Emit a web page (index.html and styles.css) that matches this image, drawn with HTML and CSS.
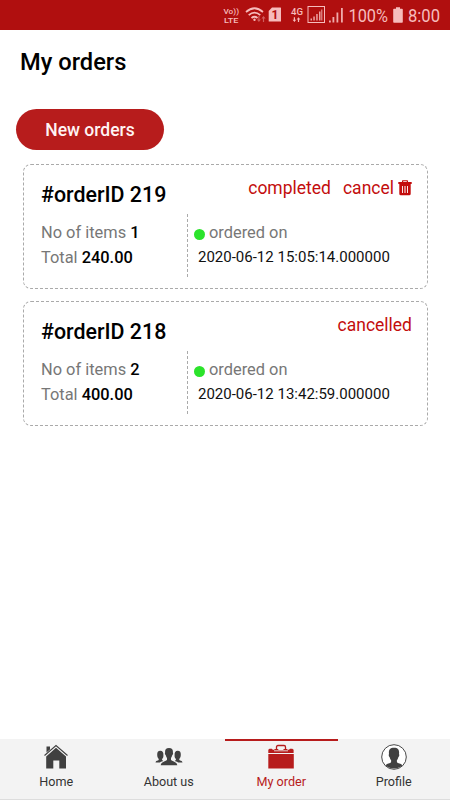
FILE: index.html
```html
<!DOCTYPE html>
<html lang="en">
<head>
  <meta charset="UTF-8" />
  <meta name="viewport" content="width=device-width, initial-scale=1.0" />
  <title>My orders</title>
  <link rel="stylesheet" href="styles.css">
</head>
<body>
  <header class="status-bar">
    <svg width="230" height="30" viewBox="220 0 230 30" fill="#f6bcbc">
      <!-- volte -->
      <g font-size="8" font-weight="500">
        <text x="223.500" y="14" textLength="15.500" lengthAdjust="spacingAndGlyphs">Vo))</text>
        <text x="224" y="22.800" textLength="14.500" lengthAdjust="spacingAndGlyphs">LTE</text>
      </g>
      <!-- wifi -->
      <g fill="none" stroke="#f6bcbc" stroke-width="1.700">
        <path d="M246 12Q254.500 4.500 263 12" />
        <path d="M248.700 15.200Q254.500 10 260.300 15.200" />
        <path d="M251.500 18Q254.500 15.500 257.500 18" />
      </g>
      <circle cx="254.500" cy="19.800" r="1.200" />
      <path opacity=".45" d="M258.300 16h1.200v3.500h1.500l-2.100 2.500-2.100-2.500h1.500zM262.900 22h1.200v-3.500h1.500l-2.100-2.500-2.100 2.500h1.500z" />
      <!-- sim card -->
      <path d="M272 7.500h8.500q.5 0 .5.500v13.500h-12.300V11z" />
      <text x="271.500" y="19" font-size="12" font-weight="700" fill="#b01010">1</text>
      <!-- mobile signal -->
      <text x="291" y="15" font-size="9.500" font-weight="500" textLength="12" lengthAdjust="spacingAndGlyphs">4G</text>
      <path d="M293.800 17.200h1.200v2.500h1.200l-1.800 2.300-1.800-2.300h1.200zM297.900 22h1.200v-2.500h1.200l-1.800-2.300-1.800 2.300h1.200z" />
      <rect x="308" y="6.500" width="16.500" height="16" fill="none" stroke="#f6bcbc" />
      <path d="M310.500 18.500h1.500v2h-1.500zM313.300 16.500h1.500v4h-1.500zM316.200 14h1.500v6.500h-1.500zM319 11.500h1.500v9H319zM321.300 9.500h1v11h-1z" opacity=".85" />
      <path d="M329 20.500h1.800v2H329zM332.500 17h1.800v5.500h-1.800zM336.500 12.500h1.800v10h-1.800zM341 8h1.800v14.500H341z" opacity=".9" />
      <text x="348.500" y="22.200" font-size="19" textLength="39.500" lengthAdjust="spacingAndGlyphs">100%</text>
      <!-- battery -->
      <path d="M396 7.200h4v1.500h2q.8 0 .8.800v12.400q0 .8-.8.800h-8q-.8 0-.8-.8V9.500q0-.8.800-.8h2z" />
      <text x="408" y="22.200" font-size="19" textLength="32" lengthAdjust="spacingAndGlyphs">8:00</text>
    </svg>
  </header>

  <main class="content">
    <h1 class="title">My orders</h1>
    <button class="new-orders">New orders</button>

    <section class="orders">
      <article class="order">
        <div class="order-head">
          <h2 class="order-id">#orderID 219</h2>
          <div class="order-status">
            <span>completed</span>
            <span class="cancel">cancel
              <svg class="trash" width="14" height="16" viewBox="0 0 14 16" fill="#c30d0d">
                <path d="M4 2V1q0-.7.700-.7h4.600q.7 0 .7.700v1h3.700v1.900H.3V2zm1.200 0h3.600v-.7H5.200z" />
                <path fill-rule="evenodd" d="M1.300 3.500h11.400v10.200q0 1.600-1.500 1.600H2.800q-1.500 0-1.500-1.600zM4 6v7h.9V6zm2.500 0v7h1V6zM9.100 6v7h.9V6z" />
              </svg>
            </span>
          </div>
        </div>
        <div class="order-body">
          <div class="summary">
            <p>No of items <b>1</b></p>
            <p>Total <b>240.00</b></p>
          </div>
          <div class="placed">
            <p><i class="dot"></i>ordered on</p>
            <p class="date">2020-06-12 15:05:14.000000</p>
          </div>
        </div>
      </article>

      <article class="order">
        <div class="order-head">
          <h2 class="order-id">#orderID 218</h2>
          <div class="order-status">
            <span>cancelled</span>
          </div>
        </div>
        <div class="order-body">
          <div class="summary">
            <p>No of items <b>2</b></p>
            <p>Total <b>400.00</b></p>
          </div>
          <div class="placed">
            <p><i class="dot"></i>ordered on</p>
            <p class="date">2020-06-12 13:42:59.000000</p>
          </div>
        </div>
      </article>
    </section>
  </main>

  <nav class="tabs">
    <a class="tab">
      <svg width="28" height="26" viewBox="0 0 28 26" fill="#404040">
        <path d="M4.500 2.500h3.500v3L4.500 8.500z" />
        <path d="M2.500 11.500L14 1.500 25.500 11.500" fill="none" stroke="#404040" stroke-width="1.100" />
        <path d="M14 3.800L24 12.500V24.500h-6.700v-8h-6v8H4.200V12.500z" />
      </svg>
      <span>Home</span>
    </a>
    <a class="tab">
      <svg width="28" height="26" viewBox="0 0 28 26" fill="#404040">
        <path d="M14 4c3.200 0 4.200 2 3.900 4.800.5.900 0 2-.6 2.200-.3 1.500-.9 2.300-1.300 2.900v2c1 1.200 5.800 1.500 6.300 5.400H5.700c.5-3.900 5.300-4.200 6.300-5.400v-2c-.4-.6-1-1.400-1.300-2.900-.6-.2-1.100-1.300-.6-2.200C9.800 6 10.800 4 14 4z" />
        <path d="M5.300 6.800c2.300 0 3.300 1.700 3.100 4 0 2 .2 2.800-1.300 4.300v1l1.200.9q-3 .9-3.400 1.500H.5c.3-2 2.500-1.800 3.200-2.500v-1C2.200 13.500 2.300 12 2.200 10.800c-.1-2.400.8-4 3.100-4z" />
        <path d="M22.700 6.800c-2.300 0-3.300 1.700-3.100 4 0 2-.2 2.800 1.300 4.300v1l-1.200.9q3 .9 3.400 1.500h4.400c-.3-2-2.500-1.800-3.200-2.500v-1c1.500-1.500 1.400-3 1.500-4.200.1-2.400-.8-4-3.100-4z" />
      </svg>
      <span>About us</span>
    </a>
    <a class="tab active">
      <svg width="28" height="26" viewBox="0 0 28 26" fill="#b71c1c">
        <path d="M9.500 5.500V3q0-1.500 1.500-1.500h6Q18.500 1.500 18.500 3v2.500" fill="none" stroke="#b71c1c" stroke-width="1.300" />
        <path d="M1.300 9V5.800l1.200-1h2.300l1 1h1.700V5h3.800v1h5.200V5h3.800v.8h1.700l1-1h2.300l1.300 1V9z" />
        <path d="M7 6.800h14" stroke="#f3f3f3" stroke-width=".8" />
        <path d="M1.300 10h25.500v14.500H1.300z" />
      </svg>
      <span>My order</span>
    </a>
    <a class="tab">
      <svg width="28" height="26" viewBox="0 0 28 26" fill="#404040">
        <circle cx="14" cy="13" r="12.300" fill="#fff" stroke="#333" stroke-width=".9" />
        <path d="M14 3.800c4.500 0 5.500 2.800 5 6.300.6 1 .1 2.500-.6 2.800-.3 1.600-1 2.700-1.500 3.200v2c.8 1.600 4.300 1.500 5.600 3.200-4.800 4.400-12.200 4.400-17 0 1.300-1.700 4.800-1.600 5.600-3.200v-2c-.5-.5-1.200-1.600-1.500-3.200-.7-.3-1.200-1.800-.6-2.800-.5-3.500.5-6.300 5-6.300z" />
      </svg>
      <span>Profile</span>
    </a>
  </nav>
</body>
</html>
```
FILE: styles.css
```css
* {
  margin: 0;
  padding: 0;
  box-sizing: border-box;
}

:root {
  --red: #b71c1c;
  --status: #c30d0d;
  --bar: #f3f3f3;
}

body {
  height: 100vh;
  display: flex;
  flex-direction: column;
  background: #fff;
  color: #000;
  font-family: Roboto, "Liberation Sans", sans-serif;
  overflow: hidden;
}

.status-bar {
  height: 30px;
  background: #b00f0f;
  display: flex;
  justify-content: flex-end;
}

/* --- orders --- */
.content {
  flex: 1;
}

.title {
  padding: 18px 20px 0;
  font-size: 23.7px;
  line-height: 29px;
  font-weight: 500;
}

.new-orders {
  display: block;
  width: 148px;
  height: 41px;
  margin: 32px 0 0 16px;
  border: none;
  border-radius: 21px;
  background: var(--red);
  color: #fff3f3;
  font: 500 17.5px Roboto, sans-serif;
}

.orders {
  display: flex;
  flex-direction: column;
  gap: 12px;
  padding: 14px 22px 0 23px;
}

.order {
  height: 125px;
  padding: 13px 15px 0 17px;
  border: 1px dashed #aaa;
  border-radius: 8px;
}

.order-head {
  display: flex;
  justify-content: space-between;
  height: 36px;
}

.order-id {
  font-size: 21.4px;
  line-height: 34px;
  font-weight: 500;
}

.order-status {
  display: flex;
  gap: 12px;
  color: var(--status);
  font-size: 17.5px;
  line-height: 21px;
}

.cancel {
  display: flex;
  gap: 4px;
}

.trash {
  margin-top: 2px;
}

.order-body {
  display: flex;
  color: #777;
  font-size: 16.4px;
  line-height: 25px;
}

.order-body b {
  color: #000;
  font-weight: 500;
}

.summary {
  width: 147px;
  height: 63px;
  padding-top: 6px;
  border-right: 1px dashed #aaa;
}

.placed {
  padding: 6px 0 0 6px;
  white-space: nowrap;
}

.dot {
  display: inline-block;
  width: 11px;
  height: 11px;
  margin-right: 4px;
  border-radius: 50%;
  background: #2be32b;
  vertical-align: -1.5px;
}

.date {
  padding-left: 4px;
  color: #111;
  font-size: 15px;
}

/* --- bottom tabs --- */
.tabs {
  display: flex;
  height: 61px;
  background: var(--bar);
  border-bottom: 1px solid #ddd;
}

.tab {
  flex: 1;
  display: flex;
  flex-direction: column;
  align-items: center;
  border-top: 2px solid transparent;
  padding-top: 3px;
  color: #333;
  font-size: 12.6px;
  line-height: 16px;
}

.tab span {
  margin-top: 4px;
}

.tab.active {
  color: var(--red);
  border-top-color: var(--red);
}
```
